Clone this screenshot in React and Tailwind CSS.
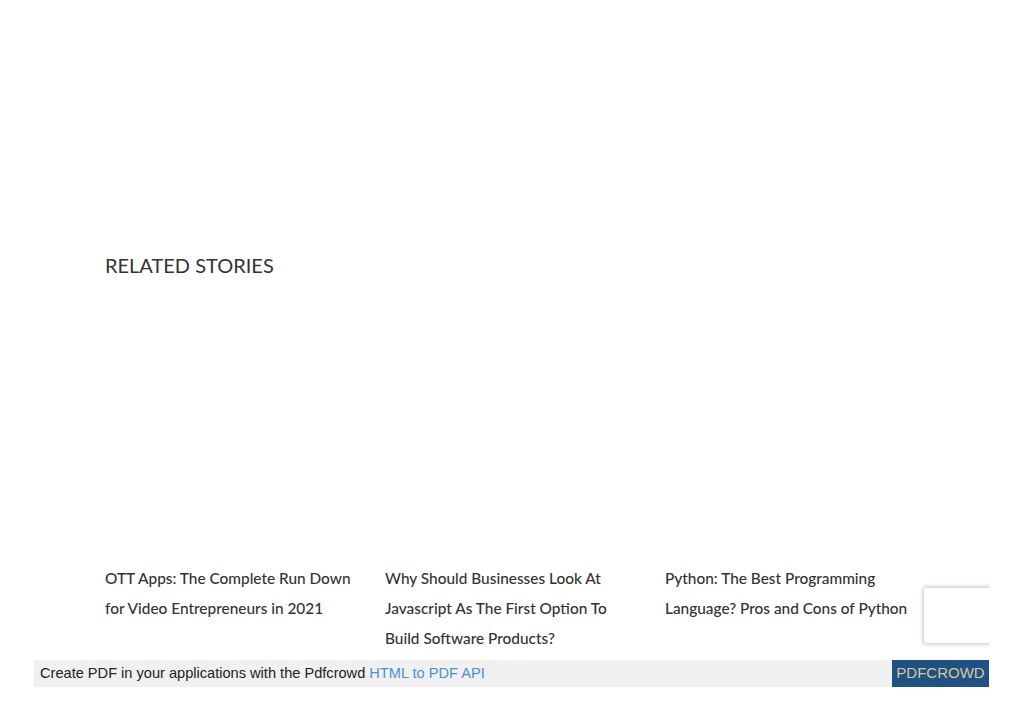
export default function App() {
  const stories = [
    "OTT Apps: The Complete Run Down for Video Entrepreneurs in 2021",
    "Why Should Businesses Look At Javascript As The First Option To Build Software Products?",
    "Python: The Best Programming Language? Pros and Cons of Python",
  ];
  return (
    <div className="w-[1023px] h-[724px] bg-white overflow-hidden">
      <div className="relative w-[955px] mx-auto overflow-hidden h-[724px]">
        <div className="pl-[71px] pt-[251px]">
          <h2 className="text-[20px] leading-[28px] text-[#333] font-normal" style={{ fontFamily: "Lato, 'Noto Sans', sans-serif" }}>
            RELATED STORIES
          </h2>
          <div className="mt-[284px] grid grid-cols-[280px_280px_280px]">
            {stories.map((s) => (
              <a key={s} className="pr-[20px] text-[15.4px] leading-[30px] text-[#333] font-medium" style={{ fontFamily: "Lato, 'Noto Sans', sans-serif" }}>
                {s}
              </a>
            ))}
          </div>
        </div>
        <div className="absolute left-[890px] top-[588px] w-[70px] h-[55px] bg-white rounded-[3px] shadow-[0_0_4px_1px_rgba(0,0,0,0.25)]" />
        <div className="absolute left-0 top-[660px] w-[955px] h-[27px] bg-[#f0f0f0] flex items-center justify-between" style={{ fontFamily: "'Liberation Sans', Arial, sans-serif" }}>
          <span className="pl-[6px] pt-px text-[14.6px] text-[#222]">
            Create PDF in your applications with the Pdfcrowd <span className="text-[#4a8fd6]">HTML to PDF API</span>
          </span>
          <span className="h-[27px] w-[97px] bg-[#1f5282] text-[#d8c89c] text-[15px] flex items-center justify-center">PDFCROWD</span>
        </div>
      </div>
    </div>
  );
}
